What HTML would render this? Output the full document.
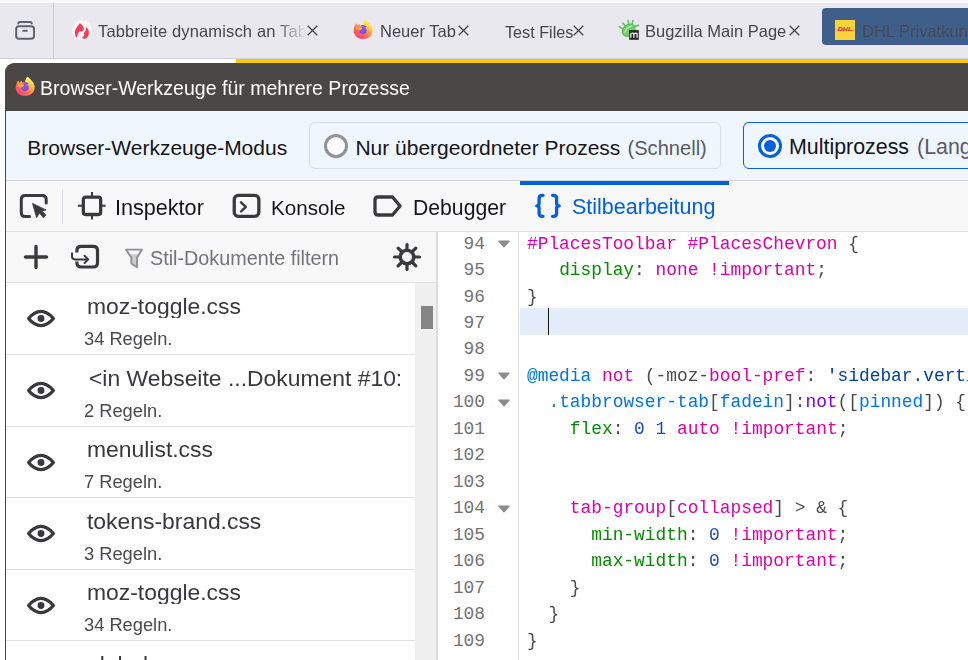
<!DOCTYPE html>
<html><head><meta charset="utf-8">
<style>
*{margin:0;padding:0;box-sizing:border-box}
html,body{width:968px;height:660px;overflow:hidden;background:#fff;position:relative;font-family:"Liberation Sans",sans-serif}
.a{position:absolute}
.t{position:absolute;white-space:nowrap;line-height:1}
/* tab strip */
#strip{left:0;top:0;width:968px;height:59px;background:#e9e8ee}
#striptop{left:0;top:0;width:968px;height:3px;background:#f9f9fb}
#stripb{left:0;top:58px;width:968px;height:1px;background:#cfcfd4}
#sep{left:53px;top:3px;width:1px;height:55px;background:#c8c8cf}
.tab{font-size:16.5px;color:#45454c}
.x{font-size:15px;color:#3b3b42}
#yel{left:236px;top:59px;width:732px;height:4px;background:#fdc80a}
/* window */
#win{left:5px;top:63px;width:980px;height:620px;background:#4a4846;border-radius:9px 0 0 0;overflow:hidden}
#title{font-size:19.55px;color:#fff}
#mode{left:1px;top:48px;width:980px;height:70px;background:#eff6fd;border-bottom:1px solid #d0d7df}
#tool{left:1px;top:118px;width:980px;height:51px;background:#f8f8f8;border-bottom:1px solid #dfdfdf}
#side{left:1px;top:169px;width:430px;height:460px;background:#fff}
#sidetool{left:0;top:0;width:430px;height:51px;background:#f8f8f8;border-bottom:1px solid #dfdfdf}
#divider{left:431px;top:169px;width:2px;height:460px;background:#dcdcdf}
#editor{left:433px;top:169px;width:560px;height:460px;background:#fff}
.mt{font-size:21px;color:#15141a}
.row{left:0;width:409px;border-bottom:1px solid #e0e0e6}
.ln{font-family:"Liberation Mono",monospace;font-size:17.67px;color:#737373}
pre{font-family:"Liberation Mono",monospace;font-size:17.67px;line-height:26.47px;color:#4a4a4f}
.p{color:#dd00a9}.g{color:#058b00}.b{color:#0074e8}.s{color:#003eaa}.n{color:#1f4bb0}.v{color:#8000d7}
.cl{position:absolute;white-space:pre;font-family:"Liberation Mono",monospace;font-size:17.85px;line-height:26.47px;height:26.47px}
.ln{left:430px;width:55px;text-align:right;color:#737373}
.code{left:527px;color:#4a4a4f}
.gs{will-change:transform}
</style></head><body>
<div id="strip" class="a"></div>
<div id="striptop" class="a"></div>
<div id="stripb" class="a"></div>
<div id="sep" class="a"></div>
<div id="yel" class="a"></div>

<div id="win" class="a">
  <div id="mode" class="a"></div>
  <div id="tool" class="a"></div>
  <div id="side" class="a"><div id="sidetool" class="a"></div></div>
  <div id="divider" class="a"></div>
  <div id="editor" class="a"></div>
</div>

<svg width="0" height="0" style="position:absolute"><defs>
  <linearGradient id="ffg" x1="0.85" y1="0.1" x2="0.25" y2="0.95"><stop offset="0" stop-color="#fff35a"/><stop offset="0.3" stop-color="#ffc440"/><stop offset="0.55" stop-color="#ff8a4a"/><stop offset="0.8" stop-color="#ff5a5e"/><stop offset="1" stop-color="#f5408c"/></linearGradient>
  <linearGradient id="ffp" x1="0.4" y1="0" x2="0.6" y2="1"><stop offset="0" stop-color="#b348ee"/><stop offset="0.5" stop-color="#8658ea"/><stop offset="1" stop-color="#6850d6"/></linearGradient>
  <linearGradient id="ffy" x1="0.5" y1="0" x2="0.5" y2="1"><stop offset="0" stop-color="#fff35a"/><stop offset="1" stop-color="#ffd046"/></linearGradient>
  <symbol id="fflogo" viewBox="0 0 24 24">
    <path d="M14.5 1.8 C17.5 4.5 21.6 8 21.6 12.6 C21.6 17.8 17.3 21.1 12.2 21.1 C7 21.1 2.7 17.6 2.7 12.4 C2.7 9.8 3.6 7.6 5.4 5.3 L6.3 7.5 L8.5 5.8 L9.3 7.5 C10.8 6.8 11.8 6.8 12.3 6.9 C12.5 5 13.2 3.2 14.5 1.8 Z" fill="url(#ffg)"/>
    <path d="M14.5 1.8 C17.8 4.6 21.6 8.2 21.6 12.6 C20.5 10 18.5 8.5 15.5 8 C13.8 7.4 12.5 7 12.2 6.9 C12.4 5 13.2 3.2 14.5 1.8 Z" fill="url(#ffy)"/>
    <path d="M10 7.3 C12.5 6.6 14.5 7.2 15.5 8.6 C15 9.3 14.6 9.6 14.3 9.8 C15.6 10.6 16 12 15.6 13.6 C15.1 15.5 13.5 16.4 11.8 16.3 C9.6 16.2 8 14.6 8 12.6 C9 12.4 10.5 11.2 11 10.5 C10.5 9.6 10.2 8.4 10 7.3 Z" fill="url(#ffp)"/>
    <path d="M4.8 10.2 C6.5 9.8 9 9.6 11.2 10.4 C10 11.4 8.5 12.2 7.6 12.2 C6.5 11.6 5.5 10.9 4.8 10.2 Z" fill="#ffba3e"/>
  </symbol>
</defs></svg>
<!-- TAB STRIP CONTENT -->
<svg class="a" style="left:13px;top:19px" width="24" height="24" viewBox="0 0 24 24">
  <path d="M5.3 4.6 Q5.3 3 7 3 H17 Q18.7 3 18.7 4.6" fill="none" stroke="#62626c" stroke-width="2" stroke-linecap="round"/>
  <rect x="3.2" y="7.2" width="17.8" height="12.6" rx="2.8" fill="none" stroke="#62626c" stroke-width="2"/>
  <path d="M10.2 11.8 H13.9" stroke="#62626c" stroke-width="2" stroke-linecap="round"/>
</svg>
<div class="a" style="left:72px;top:20px;width:20px;height:20px;border-radius:50%;background:#f7f7f9"></div>
<svg class="a" style="left:72px;top:20px" width="20" height="20" viewBox="0 0 20 20">
  <path d="M7.8 3.1 C9.5 4.5 11.5 6.5 11.8 9 C11.5 10.5 10 11.5 8.9 11.8 C8 11.2 7.2 11.2 6.8 12 C6 13.5 5.5 15.5 4.6 17.8 C3.3 16.5 2.9 14.5 2.9 12.5 C2.9 9 6 6.5 7.8 3.1 Z" fill="#ff3a57"/>
  <path d="M14.4 7.1 C16 8.5 16.9 10.5 16.9 12.8 C16.9 16.3 14.5 18.9 12 18.9 C11.2 18.9 10.5 18.4 10 17.8 C11 17 12.3 15.5 12.5 14 C12 13.8 11.6 13.6 11.3 13.2 C12.5 12.5 13.3 11.5 13.5 10.5 C13.8 9.5 14.2 8.2 14.4 7.1 Z" fill="#ff3a57"/>
</svg>
<div class="t tab gs" style="left:98px;top:23.3px;width:208px;overflow:hidden;letter-spacing:0.15px;-webkit-mask-image:linear-gradient(to right,#000 176px,rgba(0,0,0,0.1) 206px,transparent 208px)">Tabbreite dynamisch an Tabs anpassen</div>
<svg class="a" style="left:306.8px;top:24.9px" width="11" height="11" viewBox="0 0 11 11"><path d="M0.7 0.7 L10.3 10.3 M10.3 0.7 L0.7 10.3" stroke="#45454c" stroke-width="1.3"/></svg>

<svg class="a" style="left:351px;top:18px" width="24" height="24"><use href="#fflogo"/></svg>
<div class="t tab gs" style="left:380px;top:23.3px">Neuer Tab</div>
<svg class="a" style="left:458.0px;top:24.9px" width="11" height="11" viewBox="0 0 11 11"><path d="M0.7 0.7 L10.3 10.3 M10.3 0.7 L0.7 10.3" stroke="#45454c" stroke-width="1.3"/></svg>

<div class="t tab gs" style="left:504.6px;top:23.5px;font-size:16.2px">Test Files</div>
<svg class="a" style="left:573.3px;top:24.9px" width="11" height="11" viewBox="0 0 11 11"><path d="M0.7 0.7 L10.3 10.3 M10.3 0.7 L0.7 10.3" stroke="#45454c" stroke-width="1.3"/></svg>

<svg class="a" style="left:617px;top:19px" width="24" height="22" viewBox="0 0 24 22">
  <g stroke="#5cc15a" stroke-width="1.6" stroke-linecap="round">
    <path d="M2.3 7.7 L6.5 10.5 M6 4.2 L9 8 M11 1.6 L12 6 M15.8 1.6 L15 6 M21.4 6.4 L17 7.5"/>
  </g>
  <ellipse cx="11.8" cy="11.2" rx="7" ry="5.6" transform="rotate(-42 11.8 11.2)" fill="#6fce6a" stroke="#55b752" stroke-width="1"/>
  <path d="M7.5 14 Q9 8.5 15 7" fill="none" stroke="#b9eab0" stroke-width="1.3"/>
  <rect x="12.2" y="11.1" width="9.6" height="9.7" fill="#272727"/>
  <path d="M13.8 18.8 V14.3 M13.8 15 Q15.5 13.3 16.9 14.6 V18.8 M16.9 15 Q18.6 13.3 20.1 14.6 V18.8" fill="none" stroke="#fff" stroke-width="1.2"/>
</svg>
<div class="t tab gs" style="left:645px;top:23.3px">Bugzilla Main Page</div>
<svg class="a" style="left:788.8px;top:24.9px" width="11" height="11" viewBox="0 0 11 11"><path d="M0.7 0.7 L10.3 10.3 M10.3 0.7 L0.7 10.3" stroke="#45454c" stroke-width="1.3"/></svg>

<div class="a" style="left:822px;top:8px;width:160px;height:37px;background:#3f5f8b;border-radius:4px"></div>
<div class="a" style="left:835px;top:20px;width:20px;height:20px;background:#fdd33a"></div>
<svg class="a" style="left:835px;top:20px" width="20" height="20" viewBox="0 0 20 20">
  <path d="M0.3 10.5 H19.7" stroke="#e4602e" stroke-width="0.5"/>
  <text x="2.7" y="11.2" font-family="Liberation Sans" font-size="4.6" font-style="italic" font-weight="bold" fill="#d8262a" textLength="14.6" lengthAdjust="spacingAndGlyphs">DHL</text>
</svg>
<div class="t tab gs" style="left:862px;top:23.3px;color:#4a4a55">DHL Privatkunden</div>

<!-- TITLE -->
<svg class="a" style="left:13px;top:75px" width="24" height="24"><use href="#fflogo"/></svg>
<div class="t gs" id="title" style="left:39.5px;top:78.6px">Browser-Werkzeuge für mehrere Prozesse</div>

<!-- MODE BAR -->
<div class="t mt" style="left:27.3px;top:137.4px">Browser-Werkzeuge-Modus</div>
<div class="a" style="left:309px;top:122px;width:412px;height:47px;border:1px solid #dadce3;border-radius:6px"></div>
<div class="a" style="left:324px;top:134px;width:24px;height:24px;border:3px solid #8f8f9d;border-radius:50%;background:#fff"></div>
<div class="t mt" style="left:355.4px;top:137.4px">Nur übergeordneter Prozess <span style="color:#5b5b66;font-size:20.1px;margin-left:1.3px">(Schnell)</span></div>
<div class="a" style="left:743px;top:122px;width:260px;height:47px;border:1px solid #0061e0;border-radius:6px"></div>
<div class="a" style="left:758px;top:134px;width:24px;height:24px;border:3px solid #0061e0;border-radius:50%;background:#fff"></div>
<div class="a" style="left:764px;top:140px;width:12px;height:12px;border-radius:50%;background:#0061e0"></div>
<div class="t mt" style="left:789px;top:137.4px;font-size:21.4px">Multiprozess <span style="color:#5b5b66;margin-left:2px">(Langsamer)</span></div>

<!-- TOOLBAR -->
<div class="a" style="left:62px;top:189px;width:1px;height:35px;background:#e0e0e6"></div>
<div class="t mt gs" style="left:115.3px;top:196.9px;font-size:21.6px">Inspektor</div>
<div class="t mt gs" style="left:271.4px;top:197.7px;font-size:20.6px">Konsole</div>
<div class="t mt gs" style="left:412.6px;top:197.2px;font-size:21.2px">Debugger</div>
<div class="a" style="left:520px;top:181px;width:209px;height:4px;background:#0061e0"></div>
<div class="t mt gs" style="left:572.2px;top:197px;font-size:21.5px;color:#0061e0">Stilbearbeitung</div>

<!-- SIDE TOOLBAR -->
<div class="t gs" style="left:149.8px;top:249.3px;font-size:19.8px;color:#737378">Stil-Dokumente filtern</div>


<!-- TOOLBAR ICONS -->
<svg class="a" style="left:18px;top:192px" width="32" height="28" viewBox="0 0 32 28">
  <path d="M11.5 24.5 H7.3 Q3.3 24.5 3.3 20.5 V7.4 Q3.3 3.4 7.3 3.4 H24.2 Q28.2 3.4 28.2 7.4 V11" fill="none" stroke="#3a3a3e" stroke-width="3" stroke-linecap="round"/>
  <path d="M14.5 11.4 L28.1 18 L24.1 18.9 L27.9 23.2 L25.4 25.7 L21.4 20.9 L18.6 25.7 Z" fill="#3a3a3e" stroke="#3a3a3e" stroke-width="0.8" stroke-linejoin="round"/>
</svg>
<svg class="a" style="left:76px;top:190px" width="32" height="32" viewBox="0 0 32 32">
  <rect x="7.35" y="7.2" width="17.3" height="17.3" rx="2.2" fill="none" stroke="#3a3a3e" stroke-width="3.3"/>
  <path d="M16 2 V7.2 M16 24.5 V29.6 M2 15.85 H7.35 M24.65 15.85 H29.6" stroke="#3a3a3e" stroke-width="2"/>
</svg>
<svg class="a" style="left:231px;top:192px" width="31" height="28" viewBox="0 0 31 28">
  <rect x="3.25" y="3.45" width="24.6" height="20.9" rx="4" fill="none" stroke="#3a3a3e" stroke-width="3.3"/>
  <path d="M10 10.3 L14.8 14.9 L10 19.5" fill="none" stroke="#3a3a3e" stroke-width="2.4" stroke-linecap="round" stroke-linejoin="round"/>
</svg>
<svg class="a" style="left:371.5px;top:194px" width="32" height="24" viewBox="0 0 32 24">
  <path d="M6 3 H20.5 L28 12 L20.5 21 H6 Q3 21 3 18 V6 Q3 3 6 3 Z" fill="none" stroke="#3a3a3e" stroke-width="3.3" stroke-linejoin="round"/>
</svg>
<svg class="a" style="left:533px;top:192px" width="30" height="28" viewBox="0 0 30 28">
  <path d="M10 3.3 H9.2 Q6.1 3.3 6.1 6.4 V11.3 Q6.1 13.8 3.8 13.8 Q6.1 13.8 6.1 16.3 V21.2 Q6.1 24.3 9.2 24.3 H10" fill="none" stroke="#0061e0" stroke-width="3.3" stroke-linecap="round" stroke-linejoin="round"/>
  <path d="M19.6 3.3 H20.5 Q23.6 3.3 23.6 6.4 V11.3 Q23.6 13.8 26.2 13.8 Q23.6 13.8 23.6 16.3 V21.2 Q23.6 24.3 20.5 24.3 H19.6" fill="none" stroke="#0061e0" stroke-width="3.3" stroke-linecap="round" stroke-linejoin="round"/>
</svg>

<!-- SIDE TOOLBAR ICONS -->
<svg class="a" style="left:22px;top:243px" width="28" height="28" viewBox="0 0 28 28">
  <path d="M14 3.5 V24.5 M3.5 14 H24.5" stroke="#3a3a3e" stroke-width="3.4" stroke-linecap="round"/>
</svg>
<svg class="a" style="left:69px;top:243px" width="32" height="28" viewBox="0 0 32 28">
  <path d="M7.9 9.5 V7.6 Q7.9 3.4 12.1 3.4 H24.3 Q28.5 3.4 28.5 7.6 V19.8 Q28.5 24 24.3 24 H12.1 Q7.9 24 7.9 19.8 V18.5" fill="none" stroke="#3a3a3e" stroke-width="3.2"/>
  <path d="M3 10.3 V13.6 Q3 16.4 5.8 16.4 H19.2 M15.6 12.8 L19.2 16.4 L15.6 20" fill="none" stroke="#3a3a3e" stroke-width="2" stroke-linecap="round" stroke-linejoin="round"/>
</svg>
<svg class="a" style="left:123px;top:247px" width="22" height="23" viewBox="0 0 22 23">
  <path d="M6.1 7.2 H16.1 L14 10.6 V20.3 L8.3 16.5 V10.6 Z" fill="#cdcdcf"/>
  <path d="M3.1 2.6 H19 L14 10.6 V20.3 L8.3 16.5 V10.6 Z" fill="none" stroke="#8f8f96" stroke-width="1.9" stroke-linejoin="round"/>
</svg>
<svg class="a" style="left:391px;top:241px" width="32" height="32" viewBox="0 0 32 32">
  <g stroke="#3a3a3e" stroke-width="3.2" stroke-linecap="round">
    <path d="M16 3.5 V8.5 M16 23.5 V28.5 M3.5 16 H8.5 M23.5 16 H28.5 M7.2 7.2 L10.5 10.5 M21.5 21.5 L24.8 24.8 M7.2 24.8 L10.5 21.5 M21.5 10.5 L24.8 7.2"/>
  </g>
  <circle cx="16" cy="16" r="6.8" fill="none" stroke="#3a3a3e" stroke-width="3.6"/>
</svg>

<!-- SCROLLBAR -->
<div class="a" style="left:415px;top:283px;width:21px;height:377px;background:#f0f0f0"></div>
<div class="a" style="left:421px;top:306px;width:12px;height:23px;background:#858585"></div>
<svg class="a" style="left:25px;top:308.45px" width="32" height="21" viewBox="0 0 32 21"><path d="M3.6 10.5 Q9.5 3.4 16 3.4 Q22.5 3.4 28.4 10.5 Q22.5 17.6 16 17.6 Q9.5 17.6 3.6 10.5 Z" fill="none" stroke="#38383d" stroke-width="3.2" stroke-linejoin="round"/><circle cx="16" cy="10.5" r="3.4" fill="#38383d"/></svg>
<div class="t gs" style="left:86.9px;top:294.95px;font-size:22.9px;color:#38383d;width:325px;overflow:hidden">moz-toggle.css</div>
<div class="t gs" style="left:84px;top:329.99px;font-size:18.3px;color:#4a4a4f">34 Regeln.</div>
<div class="a" style="left:6px;top:354px;width:409px;height:1px;background:#e0e0e0"></div>
<svg class="a" style="left:25px;top:380.05px" width="32" height="21" viewBox="0 0 32 21"><path d="M3.6 10.5 Q9.5 3.4 16 3.4 Q22.5 3.4 28.4 10.5 Q22.5 17.6 16 17.6 Q9.5 17.6 3.6 10.5 Z" fill="none" stroke="#38383d" stroke-width="3.2" stroke-linejoin="round"/><circle cx="16" cy="10.5" r="3.4" fill="#38383d"/></svg>
<div class="t gs" style="left:88.5px;top:366.55px;font-size:22.9px;color:#38383d;width:313px;overflow:hidden">&lt;in Webseite ...Dokument #10:</div>
<div class="t gs" style="left:84px;top:401.59px;font-size:18.3px;color:#4a4a4f">2 Regeln.</div>
<div class="a" style="left:6px;top:426px;width:409px;height:1px;background:#e0e0e0"></div>
<svg class="a" style="left:25px;top:451.65px" width="32" height="21" viewBox="0 0 32 21"><path d="M3.6 10.5 Q9.5 3.4 16 3.4 Q22.5 3.4 28.4 10.5 Q22.5 17.6 16 17.6 Q9.5 17.6 3.6 10.5 Z" fill="none" stroke="#38383d" stroke-width="3.2" stroke-linejoin="round"/><circle cx="16" cy="10.5" r="3.4" fill="#38383d"/></svg>
<div class="t gs" style="left:86.9px;top:438.15px;font-size:22.9px;color:#38383d;width:325px;overflow:hidden">menulist.css</div>
<div class="t gs" style="left:84px;top:473.19px;font-size:18.3px;color:#4a4a4f">7 Regeln.</div>
<div class="a" style="left:6px;top:497px;width:409px;height:1px;background:#e0e0e0"></div>
<svg class="a" style="left:25px;top:523.25px" width="32" height="21" viewBox="0 0 32 21"><path d="M3.6 10.5 Q9.5 3.4 16 3.4 Q22.5 3.4 28.4 10.5 Q22.5 17.6 16 17.6 Q9.5 17.6 3.6 10.5 Z" fill="none" stroke="#38383d" stroke-width="3.2" stroke-linejoin="round"/><circle cx="16" cy="10.5" r="3.4" fill="#38383d"/></svg>
<div class="t gs" style="left:86.9px;top:509.75px;font-size:22.9px;color:#38383d;width:325px;overflow:hidden">tokens-brand.css</div>
<div class="t gs" style="left:84px;top:544.79px;font-size:18.3px;color:#4a4a4f">3 Regeln.</div>
<div class="a" style="left:6px;top:569px;width:409px;height:1px;background:#e0e0e0"></div>
<svg class="a" style="left:25px;top:594.85px" width="32" height="21" viewBox="0 0 32 21"><path d="M3.6 10.5 Q9.5 3.4 16 3.4 Q22.5 3.4 28.4 10.5 Q22.5 17.6 16 17.6 Q9.5 17.6 3.6 10.5 Z" fill="none" stroke="#38383d" stroke-width="3.2" stroke-linejoin="round"/><circle cx="16" cy="10.5" r="3.4" fill="#38383d"/></svg>
<div class="t gs" style="left:86.9px;top:581.35px;font-size:22.9px;color:#38383d;width:325px;overflow:hidden">moz-toggle.css</div>
<div class="t gs" style="left:84px;top:616.39px;font-size:18.3px;color:#4a4a4f">34 Regeln.</div>
<div class="a" style="left:6px;top:640px;width:409px;height:1px;background:#e0e0e0"></div>
<svg class="a" style="left:25px;top:666.45px" width="32" height="21" viewBox="0 0 32 21"><path d="M3.6 10.5 Q9.5 3.4 16 3.4 Q22.5 3.4 28.4 10.5 Q22.5 17.6 16 17.6 Q9.5 17.6 3.6 10.5 Z" fill="none" stroke="#38383d" stroke-width="3.2" stroke-linejoin="round"/><circle cx="16" cy="10.5" r="3.4" fill="#38383d"/></svg>
<div class="t gs" style="left:86.9px;top:652.95px;font-size:22.9px;color:#38383d;width:325px;overflow:hidden">global.css</div>


<!-- EDITOR -->
<div class="a" style="left:518px;top:232px;width:1px;height:428px;background:#dddddd"></div>
<div class="a" style="left:520px;top:308px;width:460px;height:27px;background:#e3eefa"></div>
<div class="a" style="left:548px;top:308px;width:1.3px;height:27px;background:#111"></div>
<div class="cl ln" style="top:230.56px">94</div><div class="cl code gs" style="top:230.56px"><span class="p">#PlacesToolbar #PlacesChevron</span> {</div>
<svg class="a" style="left:498px;top:240.00px" width="12" height="8" viewBox="0 0 12 8"><path d="M1 1.1 H11 L6 6.8 Z" fill="#8c8c8c" stroke="#8c8c8c" stroke-width="1.3" stroke-linejoin="round"/></svg>
<div class="cl ln" style="top:257.03px">95</div><div class="cl code gs" style="top:257.03px">   <span class="g">display</span>: <span class="p">none</span> <span class="p">!important</span>;</div>
<div class="cl ln" style="top:283.50px">96</div><div class="cl code gs" style="top:283.50px">}</div>
<div class="cl ln" style="top:309.97px">97</div>
<div class="cl ln" style="top:336.44px">98</div>
<div class="cl ln" style="top:362.91px">99</div><div class="cl code gs" style="top:362.91px"><span class="b">@media</span> <span class="p">not</span> (-moz-<span class="p">bool-pref</span>: <span class="s">'sidebar.verticalTabs'</span>) {</div>
<svg class="a" style="left:498px;top:372.35px" width="12" height="8" viewBox="0 0 12 8"><path d="M1 1.1 H11 L6 6.8 Z" fill="#8c8c8c" stroke="#8c8c8c" stroke-width="1.3" stroke-linejoin="round"/></svg>
<div class="cl ln" style="top:389.38px">100</div><div class="cl code gs" style="top:389.38px">  <span class="b">.tabbrowser-tab</span>[<span class="b">fadein</span>]:<span class="v">not</span>([<span class="b">pinned</span>]) {</div>
<svg class="a" style="left:498px;top:398.82px" width="12" height="8" viewBox="0 0 12 8"><path d="M1 1.1 H11 L6 6.8 Z" fill="#8c8c8c" stroke="#8c8c8c" stroke-width="1.3" stroke-linejoin="round"/></svg>
<div class="cl ln" style="top:415.85px">101</div><div class="cl code gs" style="top:415.85px">    <span class="g">flex</span>: <span class="n">0</span> <span class="n">1</span> <span class="p">auto</span> <span class="p">!important</span>;</div>
<div class="cl ln" style="top:442.32px">102</div>
<div class="cl ln" style="top:468.79px">103</div>
<div class="cl ln" style="top:495.26px">104</div><div class="cl code gs" style="top:495.26px">    <span class="p">tab-group</span>[<span class="p">collapsed</span>] &gt; &amp; {</div>
<svg class="a" style="left:498px;top:504.70px" width="12" height="8" viewBox="0 0 12 8"><path d="M1 1.1 H11 L6 6.8 Z" fill="#8c8c8c" stroke="#8c8c8c" stroke-width="1.3" stroke-linejoin="round"/></svg>
<div class="cl ln" style="top:521.73px">105</div><div class="cl code gs" style="top:521.73px">      <span class="g">min-width</span>: <span class="n">0</span> <span class="p">!important</span>;</div>
<div class="cl ln" style="top:548.20px">106</div><div class="cl code gs" style="top:548.20px">      <span class="g">max-width</span>: <span class="n">0</span> <span class="p">!important</span>;</div>
<div class="cl ln" style="top:574.67px">107</div><div class="cl code gs" style="top:574.67px">    }</div>
<div class="cl ln" style="top:601.14px">108</div><div class="cl code gs" style="top:601.14px">  }</div>
<div class="cl ln" style="top:627.61px">109</div><div class="cl code gs" style="top:627.61px">}</div>
<div class="cl ln" style="top:654.08px">110</div>

</body></html>
